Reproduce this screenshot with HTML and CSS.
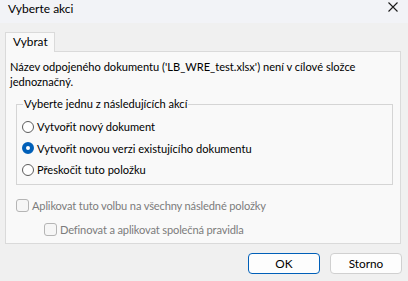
FILE: index.html
```html
<!DOCTYPE html>
<html lang="cs">
<head>
<meta charset="utf-8">
<title>Vyberte akci</title>
<link rel="stylesheet" href="styles.css">
</head>
<body>
<div class="window">
  <div class="titlebar">
    <span class="title">Vyberte akci</span>
    <svg class="close" width="10" height="10" viewBox="0 0 10 10"><path d="M0.5 0.5 L9.5 9.5 M9.5 0.5 L0.5 9.5" stroke="#1a1a1a" stroke-width="1.1" fill="none"/></svg>
  </div>
  <div class="content">
    <div class="tabs">
      <div class="tab">Vybrat</div>
    </div>
    <div class="panel">
      <p class="message">Název odpojeného dokumentu ('LB_WRE_test.xlsx') není v cílové složce<br>jednoznačný.</p>
      <div class="group">
        <div class="legend">Vyberte jednu z následujících akcí</div>
        <div class="option"><span class="radio"></span><span>Vytvořit nový dokument</span></div>
        <div class="option"><span class="radio checked"></span><span>Vytvořit novou verzi existujícího dokumentu</span></div>
        <div class="option"><span class="radio"></span><span>Přeskočit tuto položku</span></div>
      </div>
      <div class="check first"><span class="box"></span><span>Aplikovat tuto volbu na všechny následné položky</span></div>
      <div class="check second"><span class="box"></span><span>Definovat a aplikovat společná pravidla</span></div>
    </div>
    <div class="buttons">
      <button class="btn default">OK</button>
      <button class="btn">Storno</button>
    </div>
  </div>
</div>
</body>
</html>
```
FILE: styles.css
```css
html, body {
  margin: 0;
  padding: 0;
}
body {
  width: 408px;
  height: 281px;
  overflow: hidden;
  background: #f0f0f0;
  font-family: Lato, "Noto Sans", sans-serif;
  font-size: 11.1px;
  color: #000;
}
.window {
  display: flex;
  flex-direction: column;
  height: 281px;
}
.titlebar {
  height: 23px;
  box-sizing: border-box;
  background: #f2f3f7;
  display: flex;
  align-items: flex-start;
  justify-content: space-between;
  padding: 2px 10px 0 8px;
}
.title {
  font-size: 12px;
  line-height: 14px;
}
.content {
  flex: 1;
  padding: 9px 7px 0 5px;
  display: flex;
  flex-direction: column;
}
.tabs {
  display: flex;
  height: 19px;
}
.tab {
  background: #f9f9f9;
  border: 1px solid #dadada;
  border-bottom: none;
  padding: 1px 6px 0 7px;
  font-size: 11.8px;
  line-height: 16px;
  box-sizing: border-box;
  position: relative;
  z-index: 1;
  height: 20px;
}
.panel {
  background: #f9f9f9;
  border: 1px solid #dadada;
  height: 193px;
  box-sizing: border-box;
  padding: 7px 7px 0 4px;
  display: flex;
  flex-direction: column;
}
.message {
  margin: 0;
  line-height: 15px;
  white-space: nowrap;
}
.group {
  margin: 15px 0 0 6px;
  border: 1px solid #d5d5d5;
  height: 81px;
  box-sizing: border-box;
  padding: 0 0 0 5px;
  display: flex;
  flex-direction: column;
}
.legend {
  align-self: flex-start;
  background: #f9f9f9;
  margin: -8px 0 0 1px;
  padding: 0 1px;
  line-height: 14px;
}
.option {
  display: flex;
  align-items: center;
  gap: 3px;
  height: 21.5px;
}
.group .legend + .option {
  margin-top: 5px;
}
.radio {
  width: 10px;
  height: 10px;
  border: 1px solid #5c5c5c;
  border-radius: 50%;
  background: #fff;
  flex: none;
}
.radio.checked {
  width: 4px;
  height: 4px;
  border: 4px solid #005fb8;
  background: #fff;
}
.check {
  display: flex;
  align-items: center;
  gap: 3px;
  color: #7c7c7c;
  height: 14px;
  letter-spacing: -0.15px;
}
.check.first {
  margin: 13px 0 0 6px;
}
.check.second {
  margin: 10px 0 0 34px;
}
.box {
  width: 11px;
  height: 11px;
  border: 1px solid #b5b5b5;
  border-radius: 3px;
  background: #f6f6f6;
  flex: none;
}
.buttons {
  display: flex;
  justify-content: flex-end;
  gap: 10px;
  margin-top: 9px;
  margin-right: -1px;
}
.btn {
  width: 72px;
  height: 21px;
  font-family: inherit;
  font-size: 11.8px;
  background: #fdfdfd;
  border: 1px solid #d0d0d0;
  border-radius: 4px;
  padding: 0;
  color: #000;
}
.btn.default {
  border: 1px solid #005fb8;
}
```
